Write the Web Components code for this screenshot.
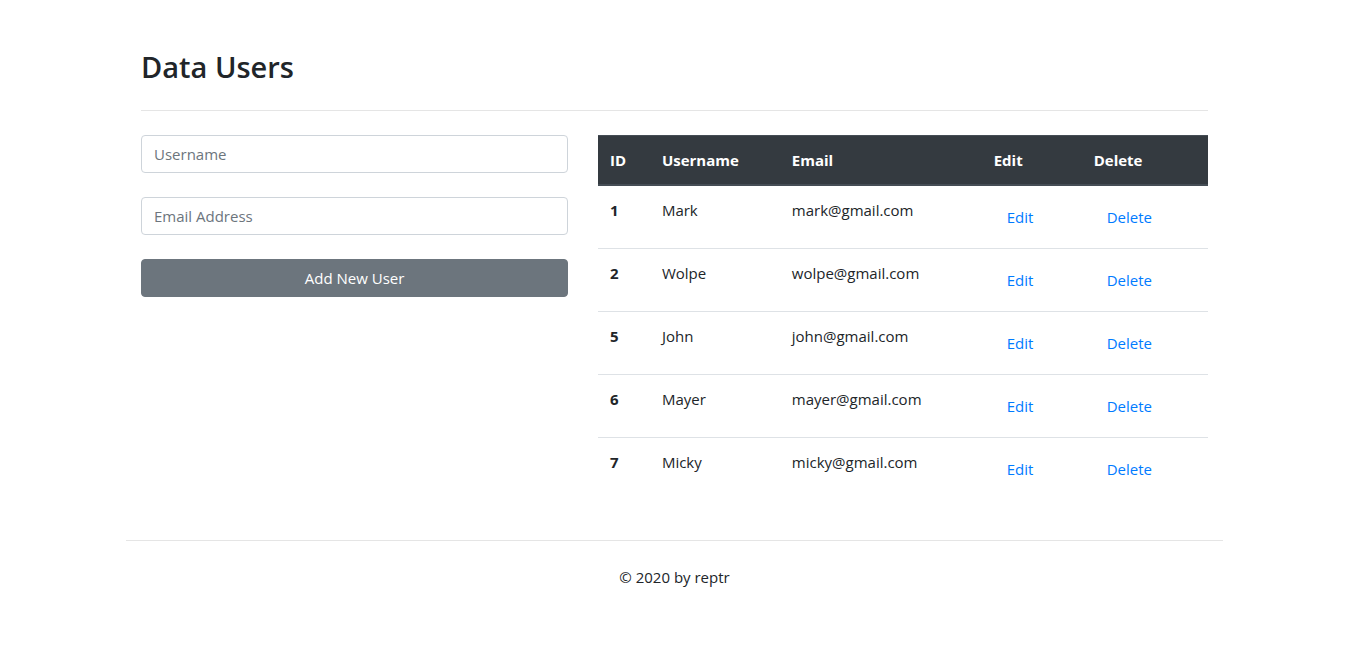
<!DOCTYPE html>
<html lang="en">
<head>
<meta charset="utf-8">
<meta name="viewport" content="width=device-width, initial-scale=1">
<title>Data Users</title>
<style>
  body {
    margin: 0;
    background: #fff;
    color: #212529;
    font: 400 15px/24px "Open Sans", "Noto Sans", sans-serif;
  }
</style>
</head>
<body>
<users-page>
  <page-heading slot="heading">Data Users</page-heading>
  <user-form slot="form"></user-form>
  <user-table slot="table"></user-table>
  <page-footer slot="footer">© 2020 by reptr</page-footer>
</users-page>

<script>
  class BaseElement extends HTMLElement {
    constructor() {
      super();
      this.attachShadow({ mode: "open" }).innerHTML = this.constructor.markup;
    }
  }

  customElements.define("users-page", class extends BaseElement {
    static markup = `
      <style>
        :host { display: block; box-sizing: border-box; max-width: 1097px; margin: 0 auto; padding: 48px 0; }
        .gutter { padding: 0 15px; }
        main { display: grid; grid-template-columns: 5fr 7fr; }
        @media (max-width: 767px) { main { grid-template-columns: 1fr; row-gap: 24px; } }
      </style>
      <header class="gutter"><slot name="heading"></slot></header>
      <main>
        <section class="gutter"><slot name="form"></slot></section>
        <section class="gutter"><slot name="table"></slot></section>
      </main>
      <slot name="footer"></slot>`;
  });

  customElements.define("page-heading", class extends BaseElement {
    static markup = `
      <style>
        :host { display: block; padding-bottom: 24px; margin-bottom: 24px; border-bottom: 1px solid #e5e5e5; }
        h1 { margin: 0; font-size: 29px; font-weight: 600; line-height: 38px; }
      </style>
      <h1><slot></slot></h1>`;
  });

  customElements.define("user-form", class extends BaseElement {
    static markup = `
      <style>
        :host { display: block; }
        form { display: grid; gap: 24px; margin: 0; }
        input, button {
          box-sizing: border-box; width: 100%; height: 38px; margin: 0; padding: 6px 12px;
          border: 1px solid #ced4da; border-radius: 4px; font: inherit;
        }
        input { background: #fff; color: #495057; }
        input::placeholder { color: #6c757d; opacity: 1; }
        button { background: #6c757d; border-color: #6c757d; color: #fff; cursor: pointer; }
        button:hover { background: #5a6268; }
      </style>
      <form>
        <input type="text" name="username" placeholder="Username" aria-label="Username">
        <input type="email" name="email" placeholder="Email Address" aria-label="Email Address">
        <button type="button">Add New User</button>
      </form>`;
  });

  const users = [
    [1, "Mark", "mark@gmail.com"],
    [2, "Wolpe", "wolpe@gmail.com"],
    [5, "John", "john@gmail.com"],
    [6, "Mayer", "mayer@gmail.com"],
    [7, "Micky", "micky@gmail.com"]
  ];

  customElements.define("user-table", class extends BaseElement {
    static markup = `
      <style>
        :host { display: block; margin-bottom: 16px; }
        table { width: 100%; table-layout: fixed; border-collapse: collapse; }
        .id { width: 8.5%; }
        .name { width: 21.3%; }
        .email { width: 33.1%; }
        .edit { width: 16.4%; }
        th, td { box-sizing: border-box; padding: 12px; text-align: left; vertical-align: top; border-top: 1px solid #dee2e6; }
        th { font-weight: 700; }
        thead th { background: #343a40; color: #fff; border-top-color: #454d55; border-bottom: 2px solid #454d55; }
        a { display: inline-block; padding: 6px 12px; border: 1px solid transparent; color: #007bff; text-decoration: none; vertical-align: middle; }
        a:hover { text-decoration: underline; }
      </style>
      <table>
        <colgroup>
          <col class="id"><col class="name"><col class="email"><col class="edit"><col>
        </colgroup>
        <thead>
          <tr>
            <th scope="col">ID</th>
            <th scope="col">Username</th>
            <th scope="col">Email</th>
            <th scope="col">Edit</th>
            <th scope="col">Delete</th>
          </tr>
        </thead>
        <tbody>${users.map(([id, name, email]) => `
          <tr>
            <th scope="row">${id}</th>
            <td>${name}</td>
            <td>${email}</td>
            <td><a href="#edit-${id}">Edit</a></td>
            <td><a href="#delete-${id}">Delete</a></td>
          </tr>`).join("")}
        </tbody>
      </table>`;
  });

  customElements.define("page-footer", class extends BaseElement {
    static markup = `
      <style>
        :host { display: block; margin-top: 24px; padding-top: 24px; border-top: 1px solid #e5e5e5; text-align: center; }
        footer { display: block; }
      </style>
      <footer><slot></slot></footer>`;
  });
</script>
</body>
</html>
